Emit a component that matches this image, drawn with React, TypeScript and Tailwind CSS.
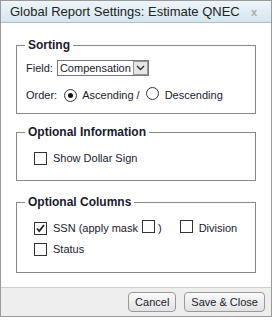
import React from "react";

const font = { fontFamily: '"Liberation Sans", Arial, sans-serif' };

function Box({ checked }: { checked?: boolean }) {
  return (
    <span className="inline-flex w-[13px] h-[13px] border border-[#333] bg-white items-center justify-center shrink-0">
      {checked && (
        <svg width="11" height="11" viewBox="0 0 11 11">
          <path d="M2 5.5 L4.3 8 L9 2" fill="none" stroke="#222" strokeWidth="1.8" />
        </svg>
      )}
    </span>
  );
}

function Radio({ checked }: { checked?: boolean }) {
  return (
    <span className="inline-flex w-[13px] h-[13px] rounded-full border border-[#333] bg-white items-center justify-center shrink-0">
      {checked && <span className="w-[5px] h-[5px] rounded-full bg-[#111]" />}
    </span>
  );
}

export default function App() {
  return (
    <div className="w-[274px] h-[320px] bg-white whitespace-nowrap" style={font}>
      <div className="w-[272px] h-[317px] border border-[#9a9a9a] flex flex-col bg-white text-[11px] leading-[16px] text-[#1a1a2e]">
        <div className="h-[22px] shrink-0 flex items-center justify-between pl-[9px] pr-[14px] bg-gradient-to-b from-[#edf5fa] to-[#d4e6f0] border-b border-[#b0bec6]">
          <span className="text-[13px] text-[#222]">Global Report Settings: Estimate QNEC</span>
          <span className="text-[11px] text-[#aaa] font-bold">x</span>
        </div>
        <div className="flex-1 flex flex-col px-[15px] pt-[14px]">
          <fieldset className="border border-[#888] px-[9px] pb-[10px] pt-[6px]">
            <legend className="px-[3px] -ml-[1px] font-bold text-[12px] leading-[16px]">Sorting</legend>
            <div className="flex items-center gap-[4px] h-[17px]">
              <span>Field:</span>
              <span className="flex items-center h-[16px] border border-[#7a7a7a] bg-white">
                <span className="px-[2px]">Compensation</span>
                <span className="w-[15px] h-[14px] bg-[#e6e6e6] border border-[#999] flex items-center justify-center">
                  <svg width="9" height="6" viewBox="0 0 9 6">
                    <path d="M1 1 L4.5 4.5 L8 1" fill="none" stroke="#333" strokeWidth="1.4" />
                  </svg>
                </span>
              </span>
            </div>
            <div className="flex items-center mt-[11px] h-[16px]">
              <span className="mr-[7px]">Order:</span>
              <Radio checked />
              <span className="ml-[5px]">Ascending /</span>
              <span className="ml-[6px]"><Radio /></span>
              <span className="ml-[6px]">Descending</span>
            </div>
          </fieldset>
          <fieldset className="border border-[#888] px-[9px] pb-[14px] pt-[10px] mt-[10px]">
            <legend className="px-[3px] -ml-[1px] font-bold text-[12px] leading-[16px]">Optional Information</legend>
            <div className="flex items-center gap-[6px] pl-[8px] h-[16px]">
              <Box />
              <span>Show Dollar Sign</span>
            </div>
          </fieldset>
          <fieldset className="border border-[#888] px-[9px] pb-[15px] pt-[10px] mt-[13px]">
            <legend className="px-[3px] -ml-[1px] font-bold text-[12px] leading-[16px]">Optional Columns</legend>
            <div className="flex items-center pl-[8px] h-[16px]">
              <Box checked />
              <span className="ml-[6px]">SSN (apply mask</span>
              <span className="ml-[4px]"><Box /></span>
              <span className="ml-[3px]">)</span>
              <span className="ml-[18px]"><Box /></span>
              <span className="ml-[6px]">Division</span>
            </div>
            <div className="flex items-center gap-[6px] pl-[8px] mt-[5px] h-[16px]">
              <Box />
              <span>Status</span>
            </div>
          </fieldset>
        </div>
        <div className="h-[29px] shrink-0 border-t border-[#ccc] bg-[#eeeeee] flex items-center justify-end gap-[8px] pr-[6px]">
          <button className="h-[20px] px-[6px] rounded-[4px] border border-[#999] bg-gradient-to-b from-[#fafafa] to-[#e2e2e2] text-[11px] text-[#1a1a2e]">Cancel</button>
          <button className="h-[20px] px-[6px] rounded-[4px] border border-[#999] bg-gradient-to-b from-[#fafafa] to-[#e2e2e2] text-[11px] text-[#1a1a2e]">Save &amp; Close</button>
        </div>
      </div>
    </div>
  );
}
